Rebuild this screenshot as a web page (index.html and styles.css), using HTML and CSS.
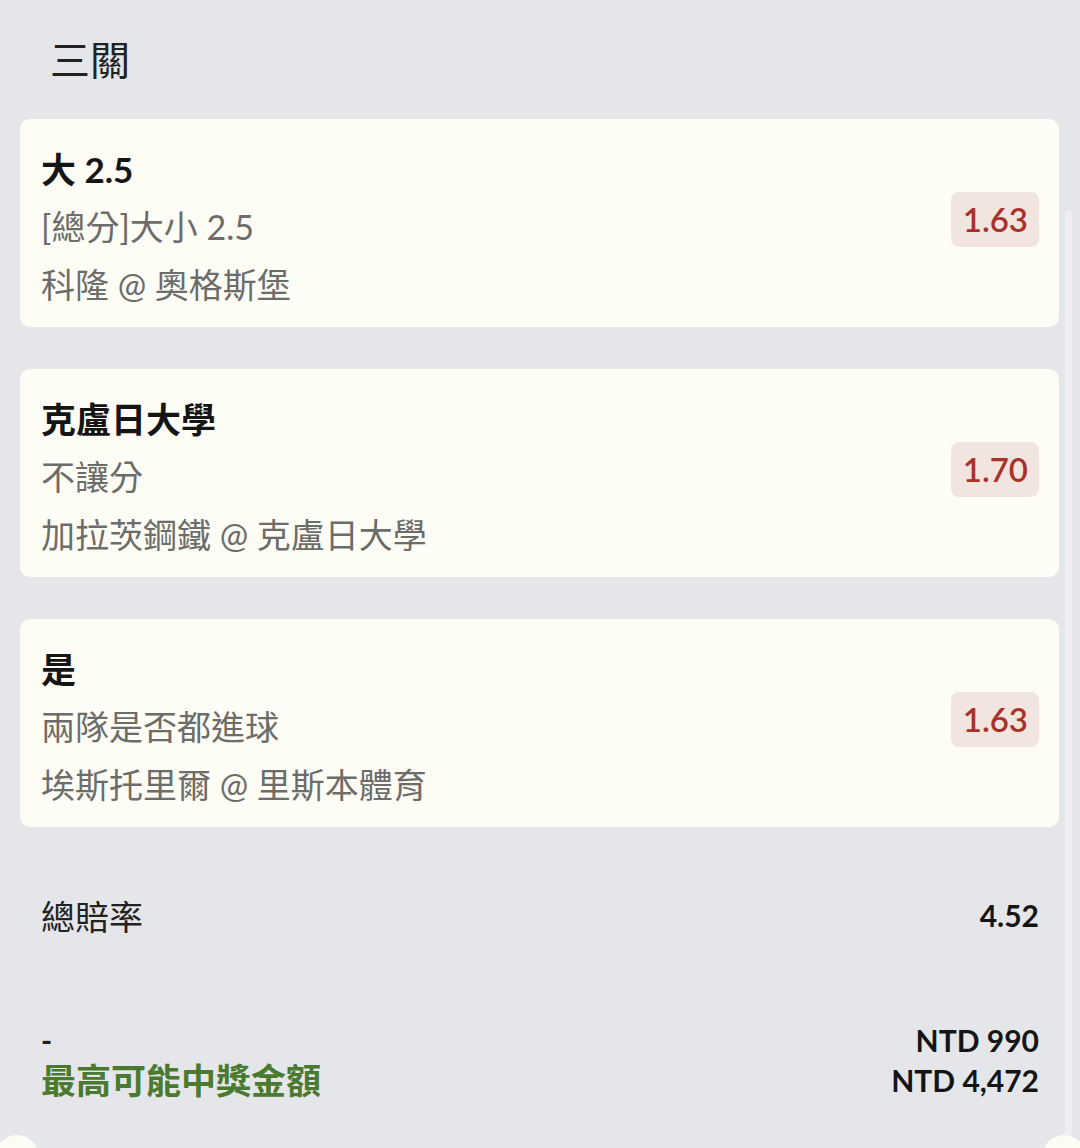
FILE: index.html
```html
<!DOCTYPE html>
<html lang="zh-Hant">
<head>
    <meta charset="UTF-8">
    <meta name="viewport" content="width=device-width, initial-scale=1.0">
    <title>三關</title>
    <link rel="stylesheet" href="styles.css">
</head>
<body>
    <div class="page">
        <h1 class="title">三關</h1>

        <div class="legs">
            <div class="leg">
                <div class="leg-info">
                    <div class="pick">大 2.5</div>
                    <div class="market">[總分]大小 2.5</div>
                    <div class="match">科隆 @ 奧格斯堡</div>
                </div>
                <div class="odds">1.63</div>
            </div>
            <div class="leg">
                <div class="leg-info">
                    <div class="pick">克盧日大學</div>
                    <div class="market">不讓分</div>
                    <div class="match">加拉茨鋼鐵 @ 克盧日大學</div>
                </div>
                <div class="odds">1.70</div>
            </div>
            <div class="leg">
                <div class="leg-info">
                    <div class="pick">是</div>
                    <div class="market">兩隊是否都進球</div>
                    <div class="match">埃斯托里爾 @ 里斯本體育</div>
                </div>
                <div class="odds">1.63</div>
            </div>
        </div>

        <div class="total-row">
            <span class="total-label">總賠率</span>
            <span class="total-value">4.52</span>
        </div>

        <div class="payout-row">
            <div class="payout-labels">
                <div class="stake-label">-</div>
                <div class="payout-label">最高可能中獎金額</div>
            </div>
            <div class="payout-values">
                <div>NTD 990</div>
                <div>NTD 4,472</div>
            </div>
        </div>
    </div>

    <div class="scroll-track"></div>
    <div class="corner-dot left"></div>
    <div class="corner-dot right"></div>
</body>
</html>
```

FILE: styles.css
```css
body {
    margin: 0;
    padding: 0;
    background-color: #e5e6e9;
    color: #1f1f1f;
    font-family: Lato, "Noto Sans CJK TC", sans-serif;
    height: 1148px;
    overflow: hidden;
    position: relative;
}
.page {
    padding: 0 21px 0 20px;
}
.title {
    margin: 0 0 31px;
    padding: 32px 0 0 30px;
    font-size: 40px;
    line-height: 56px;
    font-weight: 400;
    color: #222;
}
.legs {
    display: flex;
    flex-direction: column;
    gap: 42px;
}
.leg {
    display: flex;
    align-items: center;
    justify-content: space-between;
    background-color: #fdfdf6;
    border-radius: 10px;
    padding: 21px 20px 13px 21px;
}
.leg-info {
    font-size: 34px;
    line-height: 58px;
}
.pick {
    font-size: 35px;
    font-weight: 700;
    color: #151515;
}
.market,
.match {
    color: #6c6c6a;
}
.odds {
    margin-bottom: 15px;
    padding: 0 11px 0 12px;
    height: 55px;
    line-height: 55px;
    background-color: #f2e5df;
    color: #a8332b;
    border-radius: 8px;
    font-size: 33px;
    font-weight: 600;
}
.total-row {
    display: flex;
    justify-content: space-between;
    align-items: center;
    margin-top: 68px;
    padding: 0 20px 0 21px;
    height: 40px;
}
.total-label {
    font-size: 34px;
    color: #222;
}
.total-value {
    font-size: 30px;
    font-weight: 700;
    color: #151515;
}
.payout-row {
    display: flex;
    justify-content: space-between;
    margin-top: 85px;
    padding: 0 20px 0 21px;
    line-height: 40px;
}
.stake-label {
    font-size: 30px;
    font-weight: 700;
}
.payout-label {
    font-size: 35px;
    font-weight: 700;
    color: #4a7a2f;
}
.payout-values {
    text-align: right;
    font-size: 30px;
    font-weight: 700;
    color: #151515;
}
.scroll-track {
    position: absolute;
    left: 1065px;
    top: 210px;
    width: 7px;
    height: 960px;
    border-radius: 4px;
    background-color: #eeeef3;
}
.corner-dot {
    position: absolute;
    top: 1135px;
    width: 44px;
    height: 44px;
    border-radius: 50%;
    background-color: #fcfcf5;
}
.corner-dot.left {
    left: -5px;
}
.corner-dot.right {
    left: 1042px;
}
```
